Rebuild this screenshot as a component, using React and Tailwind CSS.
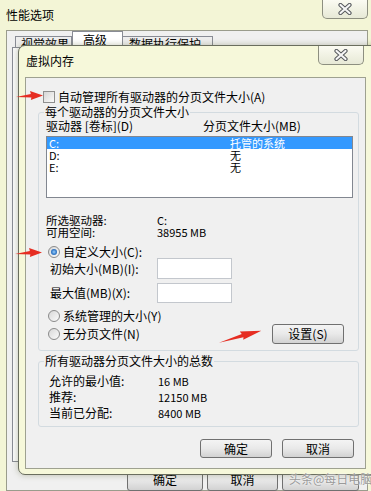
import React from "react";

const F = "font-['Noto_Sans_CJK_SC',sans-serif]";

function XGlyph() {
  return (
    <svg width="16" height="12" viewBox="0 0 16 12">
      <path d="M3.5 2 L12.5 10 M12.5 2 L3.5 10" stroke="#55585c" strokeWidth="4.2" strokeLinecap="round" />
      <path d="M3.5 2 L12.5 10 M12.5 2 L3.5 10" stroke="#f6f6f6" strokeWidth="2.2" strokeLinecap="round" />
    </svg>
  );
}

function CloseBtn({ className }) {
  return (
    <div
      className={
        "flex items-center justify-center w-[46px] h-[19px] rounded-b-[5px] border border-t-0 border-[#8d8f80] bg-linear-to-b from-[#fbfbf2] to-[#e7e9d6] " +
        className
      }
    >
      <XGlyph />
    </div>
  );
}

function Btn({ children, className = "" }) {
  return (
    <div
      className={
        "flex items-center justify-center rounded-[3px] border border-[#707070] bg-linear-to-b from-[#f4f4f4] via-[#e9e9e9] to-[#d2d2d2] text-[12px] leading-[12px] text-black " +
        className
      }
    >
      {children}
    </div>
  );
}

function Radio({ checked }) {
  return (
    <div className="w-[12px] h-[12px] rounded-full border border-[#8a8a8a] bg-linear-to-br from-[#d8d8d8] to-[#fbfbfb] flex items-center justify-center shrink-0">
      {checked && (
        <div className="w-[6px] h-[6px] rounded-full bg-radial from-[#9fd0f7] via-[#3a82cf] to-[#1a4f9a]" />
      )}
    </div>
  );
}

function Arrow({ className, w = 27, h = 11, rot = 0 }) {
  return (
    <svg className={className} width={w} height={h} viewBox={`0 0 ${w} ${h}`}>
      <g transform={`rotate(${rot} ${w / 2} ${h / 2})`}>
        <polygon
          points={`0,${h / 2 + 1.5} ${w * 0.55},${h / 2 - 1.5} ${w * 0.52},${h / 2 - 4.5} ${w},${h / 2} ${w * 0.55},${h / 2 + 4.5} ${w * 0.57},${h / 2 + 2}`}
          fill="#e62d22"
        />
      </g>
    </svg>
  );
}

function GroupBox({ title, className = "", children }) {
  return (
    <div className={"relative border border-[#d3dbe0] rounded-[3px] " + className}>
      <div className="absolute -top-[8px] left-[5px] bg-[#f0f0f0] px-[1px] text-[12px] leading-[14px] text-black">
        {title}
      </div>
      {children}
    </div>
  );
}

export default function App() {
  return (
    <div className={"relative w-[371px] h-[491px] overflow-hidden bg-[#f3f5d6] text-black " + F}>
      {/* outer window title */}
      <div className="absolute left-[6px] top-[8px] text-[12px] leading-[14px]">性能选项</div>
      <CloseBtn className="absolute left-[322px] top-0" />

      {/* outer window client */}
      <div className="absolute left-[6px] top-[30px] w-[362px] h-[461px] bg-[#f0f0f0] border border-[#9a9c8c]">
        <div className="flex items-end pl-[8px] h-[16px]">
          <div className="w-[57px] h-[11px] border border-b-0 border-[#898c95] bg-[#eeeeee] pl-[5px] text-[12px] leading-[14px] overflow-visible whitespace-nowrap">
            视觉效果
          </div>
          <div className="w-[51px] h-[16px] border border-b-0 border-[#898c95] bg-white pl-[10px] text-[12px] leading-[14px] pt-[1px]">
            高级
          </div>
          <div className="w-[90px] h-[11px] border border-b-0 border-l-0 border-[#898c95] bg-[#eeeeee] pl-[6px] text-[12px] leading-[14px] whitespace-nowrap">
            数据执行保护
          </div>
        </div>
        <div className="ml-[5px] w-[350px] h-[415px] border border-[#898c95] bg-[#fafafa]" />
        <div className="flex justify-end gap-[4px] pr-[8px] mt-[7px]">
          <Btn className="w-[76px] h-[22px]">确定</Btn>
          <Btn className="w-[71px] h-[22px]">取消</Btn>
          <Btn className="w-[77px] h-[22px] text-[#a0a0a0]"> </Btn>
        </div>
      </div>

      {/* inner dialog */}
      <div className="absolute left-[18px] top-[45px] w-[362px] h-[430px] rounded-[7px] border border-[#6a6e5e] bg-[#f6f8da] shadow-[0_0_6px_rgba(80,90,40,0.35)]">
        <div className="absolute left-[7px] top-[8px] text-[12px] leading-[14px]">虚拟内存</div>
        <CloseBtn className="absolute left-[299px] top-0" />

        <div className="ml-[6px] mt-[31px] w-[341px] h-[392px] border border-[#9ea190] bg-[#f0f0f0] flex flex-col items-start pl-[12px]">
          {/* checkbox row */}
          <div className="flex items-center h-[13px] mt-[12px] ml-[5px]">
            <div className="w-[12px] h-[12px] border border-[#8f8f8f] bg-linear-to-br from-[#d6d6d6] to-[#fafafa]" />
            <span className="ml-[3px] text-[12px] leading-[12px] whitespace-nowrap">自动管理所有驱动器的分页文件大小(A)</span>
          </div>

          {/* group 1 */}
          <GroupBox title="每个驱动器的分页文件大小" className="mt-[9px] w-[321px] h-[239px]">
            <div className="flex items-center h-[14px] mt-[6px] pl-[7px] text-[12px] leading-[12px] whitespace-nowrap">
              <span className="w-[157px]">驱动器 [卷标](D)</span>
              <span>分页文件大小(MB)</span>
            </div>
            <div className="mt-[3px] ml-[7px] w-[307px] h-[62px] border border-[#828790] bg-white text-[11px] leading-[11px]">
              <div className="flex items-center h-[12px] bg-[#3399ff] text-white pl-[2px]">
                <span className="w-[181px]">C:</span>
                <span>托管的系统</span>
              </div>
              <div className="flex items-center h-[12px] pl-[2px]">
                <span className="w-[181px]">D:</span>
                <span>无</span>
              </div>
              <div className="flex items-center h-[12px] pl-[2px]">
                <span className="w-[181px]">E:</span>
                <span>无</span>
              </div>
            </div>

            <div className="mt-[16px] pl-[7px] text-[11.5px] leading-[11px]">
              <div className="flex items-center h-[12px]">
                <span className="w-[111px]">所选驱动器:</span>
                <span className="text-[11px]">C:</span>
              </div>
              <div className="flex items-center h-[12px]">
                <span className="w-[111px]">可用空间:</span>
                <span className="text-[11px]">38955 MB</span>
              </div>
            </div>

            <div className="flex items-center h-[11px] mt-[8px] pl-[9px]">
              <Radio checked />
              <span className="ml-[3px] text-[12px] leading-[12px]">自定义大小(C):</span>
            </div>
            <div className="flex items-center h-[21px] mt-[1px] pl-[11px]">
              <span className="w-[107px] text-[12px] leading-[12px]">初始大小(MB)(I):</span>
              <div className="w-[75px] h-[21px] border border-[#c3c7cd] bg-white" />
            </div>
            <div className="flex items-center h-[20px] mt-[4px] pl-[11px]">
              <span className="w-[107px] text-[12px] leading-[12px]">最大值(MB)(X):</span>
              <div className="w-[75px] h-[20px] border border-[#c3c7cd] bg-white" />
            </div>

            <div className="flex items-start mt-[7px] pl-[9px]">
              <div className="flex flex-col">
                <div className="flex items-center h-[12px]">
                  <Radio />
                  <span className="ml-[3px] text-[12px] leading-[12px]">系统管理的大小(Y)</span>
                </div>
                <div className="flex items-center h-[12px] mt-[6px]">
                  <Radio />
                  <span className="ml-[3px] text-[12px] leading-[12px]">无分页文件(N)</span>
                </div>
              </div>
              <Btn className="ml-auto mr-[14px] mt-[14px] w-[72px] h-[20px]">设置(S)</Btn>
            </div>
          </GroupBox>

          {/* group 2 */}
          <GroupBox title="所有驱动器分页文件大小的总数" className="mt-[10px] w-[321px] h-[66px]">
            <div className="pt-[11px] pl-[10px] text-[12px] leading-[12px]">
              <div className="flex items-center h-[16px]">
                <span className="w-[109px]">允许的最小值:</span>
                <span className="text-[11px]">16 MB</span>
              </div>
              <div className="flex items-center h-[16px]">
                <span className="w-[109px]">推荐:</span>
                <span className="text-[11px]">12150 MB</span>
              </div>
              <div className="flex items-center h-[16px]">
                <span className="w-[109px]">当前已分配:</span>
                <span className="text-[11px]">8400 MB</span>
              </div>
            </div>
          </GroupBox>

          <div className="flex justify-end gap-[10px] mt-[12px] w-[316px]">
            <Btn className="w-[72px] h-[19px]">确定</Btn>
            <Btn className="w-[72px] h-[19px]">取消</Btn>
          </div>
        </div>
      </div>

      {/* annotations */}
      <Arrow className="absolute left-[16px] top-[90px]" />
      <Arrow className="absolute left-[15px] top-[247px]" />
      <Arrow className="absolute left-[218px] top-[326px]" w={44} h={20} rot={-14} />
      <div className="absolute left-[289px] top-[472px] text-[12px] leading-[14px] text-[#9a9a9a] [text-shadow:0_0_2px_#fff] whitespace-nowrap">
        头条@每日电脑
      </div>
    </div>
  );
}
